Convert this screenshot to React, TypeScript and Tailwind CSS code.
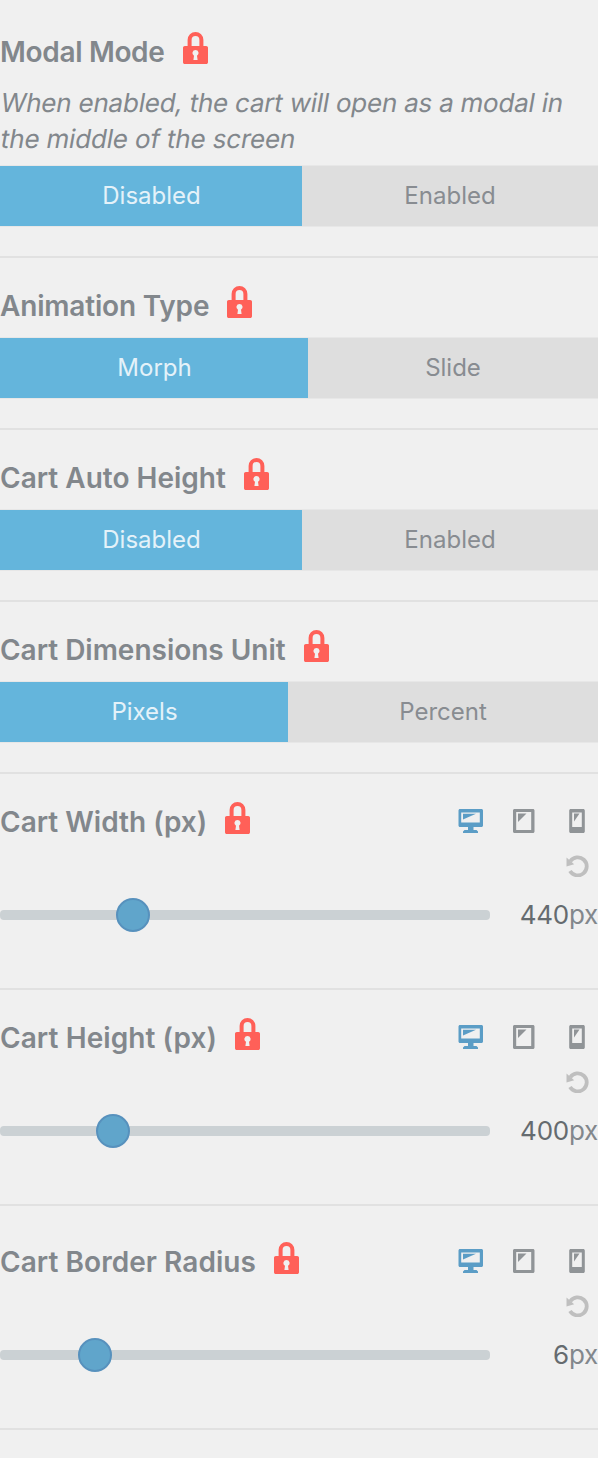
import type { ReactNode } from 'react';

function Lock() {
  return (
    <svg className="h-8 w-[25px] shrink-0" viewBox="0 0 25 32" fill="none">
      <path d="M6.600 15V8a5.900 6 0 0 1 11.800 0V15" stroke="#ff6058" strokeWidth="4" />
      <path
        fill="#ff6058"
        fillRule="evenodd"
        d="M1.800 14h21.400c1 0 1.800.8 1.800 1.800v14.400c0 1-.8 1.800-1.800 1.800H1.800C.8 32 0 31.200 0 30.200V15.800C0 14.800.8 14 1.800 14ZM12.500 18a3.100 3.100 0 0 0-1.500 5.800L10.400 28h4.200L14 23.800A3.100 3.100 0 0 0 12.500 18Z"
      />
    </svg>
  );
}

function Desktop() {
  return (
    <svg className="h-6 w-[25px]" viewBox="0 0 25 24" fill="#5b9dc6">
      <path
        fillRule="evenodd"
        d="M2 0h21.500c.8 0 1.500.7 1.500 1.500v15c0 .8-.7 1.500-1.500 1.500H15.500v3H18.500l1.500 1.500V24H5v-1.500L6.500 21H10v-3H2C1.200 18 .5 17.300.5 16.500v-15C.5.7 1.200 0 2 0ZM3.200 3.500v10h18.600V3.500Z"
      />
      <path d="M5 4.800h13L5 10.500Z" />
    </svg>
  );
}

function Tablet() {
  return (
    <svg className="h-6 w-[22px]" viewBox="0 0 22 24" fill="#909497">
      <path fillRule="evenodd" d="M1.500 0h18.500c.8 0 1.500.7 1.500 1.500v21c0 .8-.7 1.500-1.500 1.500h-18.500C.7 24 0 23.300 0 22.500v-21C0 .7.700 0 1.500 0ZM3.200 3v18h15V3Z" />
      <path d="M5 4.500h8.500L5 13Z" />
    </svg>
  );
}

function Phone() {
  return (
    <svg className="h-6 w-4" viewBox="0 0 16 24" fill="#909497">
      <path fillRule="evenodd" d="M1.700 0h12.600c.8 0 1.500.7 1.500 1.500v21c0 .8-.7 1.500-1.500 1.500H1.700C.9 24 .2 23.300.2 22.500v-21C.2.7.9 0 1.700 0ZM3.200 3.500V18h9.600V3.500Z" />
      <path d="M5 4.500h5.500l-5.500 8Z" />
    </svg>
  );
}

function Reset() {
  return (
    <svg className="h-[22px] w-[23px]" viewBox="0 0 23 22" fill="none">
      <path d="M4.300 6.300A9 9 0 1 1 4 16" stroke="#bfbfbf" strokeWidth="3.800" />
      <path d="M.5 2.500v9l7.700-2.200Z" fill="#bfbfbf" />
    </svg>
  );
}

function Title({ text, spacing }: { text: string; spacing: string }) {
  return (
    <div className="flex h-10 items-start">
      <h3 className={`whitespace-nowrap pr-[18px] text-[28px] font-semibold leading-10 text-[#82878c] ${spacing}`}>{text}</h3>
      <Lock />
    </div>
  );
}

function Toggle({ on, off, width }: { on: string; off: string; width: string }) {
  return (
    <div className="flex h-[60px] text-2xl leading-[60px] shadow-[0_0_0_1px_#e7e7e7]">
      <button className={`bg-[#64b5dc] pl-px text-center text-[#e4f2f9] ${width}`}>{on}</button>
      <button className="flex-1 bg-[#dedede] text-center text-[#888c91]">{off}</button>
    </div>
  );
}

function Section({ className, children }: { className: string; children: ReactNode }) {
  return <section className={`border-b-2 border-[#e1e1e1] ${className}`}>{children}</section>;
}

function SliderSection({ text, spacing, value, knob, className }: { text: string; spacing: string; value: string; knob: string; className: string }) {
  return (
    <Section className={className}>
      <div className="flex justify-between">
        <Title text={text} spacing={spacing} />
        <div className="flex pr-[13px] pt-[7px]">
          <div className="mr-[30px]"><Desktop /></div>
          <div className="mr-[34px]"><Tablet /></div>
          <Phone />
        </div>
      </div>
      <div className="mt-[13px] flex justify-end pr-[9px]">
        <Reset />
      </div>
      <div className="mt-5 flex h-9 items-center justify-between">
        <div className="flex h-2.5 w-[490px] items-center rounded-[4px] bg-[#cbd1d4]">
          <div className={`h-[34px] w-[34px] rounded-full border-2 border-[#5791bd] bg-[#60a5cb] ${knob}`} />
        </div>
        <div className="whitespace-nowrap text-[26px] leading-9 tracking-[-0.25px] text-[#656b6f]">
          {value}
          <span className="text-[#82878c]">px</span>
        </div>
      </div>
    </Section>
  );
}

export default function App() {
  return (
    <main className="h-[1458px] w-[598px] overflow-hidden bg-[#f0f0f0] font-['Inter',sans-serif]">
      <Section className="h-[258px] pt-8">
        <Title text="Modal Mode" spacing="tracking-[-0.32px]" />
        <p className="mb-[9px] mt-[13px] flex flex-col items-start whitespace-nowrap text-[26px] leading-9 text-[#82878c]">
          <span className="-ml-0.5 origin-bottom-left -skew-x-[10deg] tracking-[-0.23px]">When enabled, the cart will open as a modal in</span>
          <span className="-ml-0.5 origin-bottom-left -skew-x-[10deg] tracking-[-0.17px]">the middle of the screen</span>
        </p>
        <Toggle on="Disabled" off="Enabled" width="w-[302px]" />
      </Section>
      <Section className="h-[172px] pt-7">
        <Title text="Animation Type" spacing="tracking-[-0.18px]" />
        <div className="mt-3"><Toggle on="Morph" off="Slide" width="w-[308px]" /></div>
      </Section>
      <Section className="h-[172px] pt-7">
        <Title text="Cart Auto Height" spacing="tracking-[0px]" />
        <div className="mt-3"><Toggle on="Disabled" off="Enabled" width="w-[302px]" /></div>
      </Section>
      <Section className="h-[172px] pt-7">
        <Title text="Cart Dimensions Unit" spacing="tracking-[-0.02px]" />
        <div className="mt-3"><Toggle on="Pixels" off="Percent" width="w-[288px]" /></div>
      </Section>
      <SliderSection className="h-[216px] pt-7" text="Cart Width (px)" spacing="tracking-[0px]" value="440" knob="ml-[116px]" />
      <SliderSection className="h-[216px] pt-7" text="Cart Height (px)" spacing="tracking-[0.08px]" value="400" knob="ml-[96px]" />
      <SliderSection className="h-[224px] pt-9" text="Cart Border Radius" spacing="tracking-[0.05px]" value="6" knob="ml-[78px]" />
    </main>
  );
}
